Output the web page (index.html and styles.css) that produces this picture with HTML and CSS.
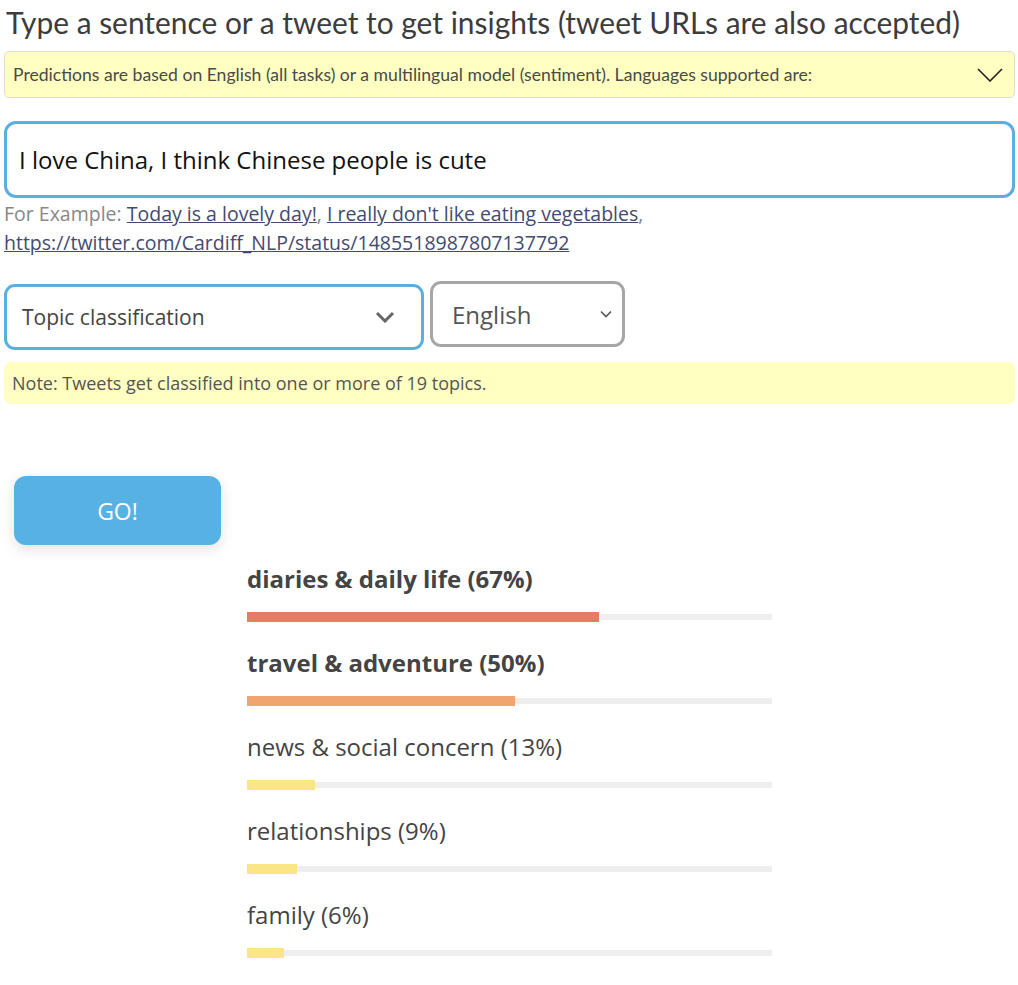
FILE: index.html
```html
<!DOCTYPE html>
<html lang="en">
<head>
    <meta charset="UTF-8">
    <meta name="viewport" content="width=device-width, initial-scale=1.0">
    <title>Tweet insights</title>
    <link rel="stylesheet" href="styles.css">
</head>
<body>

<div class="page">
    <h1 class="title">Type a sentence or a tweet to get insights (tweet URLs are also accepted)</h1>

    <!-- Nota plegable sobre idiomas -->
    <div class="langs">
        <span>Predictions are based on English (all tasks) or a multilingual model (sentiment). Languages supported are:</span>
        <svg class="langs-arrow" width="26" height="14" viewBox="0 0 26 14">
            <path d="M1 1 L13 13 L25 1" fill="none" stroke="#222" stroke-width="1.6"/>
        </svg>
    </div>

    <div class="text-box">I love China, I think Chinese people is cute</div>

    <p class="examples">
        For Example: <a href="#">Today is a lovely day!</a>, <a href="#">I really don't like eating vegetables</a>,
        <a href="#">https://twitter.com/Cardiff_NLP/status/1485518987807137792</a>
    </p>

    <div class="options">
        <div class="select select-task">
            <span>Topic classification</span>
            <svg width="20" height="12" viewBox="0 0 20 12">
                <path d="M2 2 L10 10 L18 2" fill="none" stroke="#666" stroke-width="3"/>
            </svg>
        </div>
        <div class="select select-lang">
            <span>English</span>
            <svg width="12" height="8" viewBox="0 0 12 8">
                <path d="M1 1.5 L6 6.5 L11 1.5" fill="none" stroke="#555" stroke-width="1.6"/>
            </svg>
        </div>
    </div>

    <div class="note">Note: Tweets get classified into one or more of 19 topics.</div>

    <button class="go">GO!</button>

    <!-- Resultados -->
    <div class="results">
        <div class="result strong">
            <div class="label">diaries &amp; daily life (67%)</div>
            <div class="track"><div class="fill red" style="width: 67%"></div></div>
        </div>
        <div class="result strong">
            <div class="label">travel &amp; adventure (50%)</div>
            <div class="track"><div class="fill orange" style="width: 51%"></div></div>
        </div>
        <div class="result">
            <div class="label">news &amp; social concern (13%)</div>
            <div class="track"><div class="fill yellow" style="width: 13%"></div></div>
        </div>
        <div class="result">
            <div class="label">relationships (9%)</div>
            <div class="track"><div class="fill yellow" style="width: 9.5%"></div></div>
        </div>
        <div class="result">
            <div class="label">family (6%)</div>
            <div class="track"><div class="fill yellow" style="width: 7%"></div></div>
        </div>
    </div>
</div>

<div class="bottom-line"></div>

</body>
</html>
```

FILE: styles.css
```css
body {
    margin: 0;
    background-color: #fff;
    color: #444;
    font-family: "Open Sans", Arial, sans-serif;
}
.page {
    padding: 0 3px 0 4px;
}
.title {
    margin: 0;
    padding: 4px 0 0 2px;
    height: 51px;
    box-sizing: border-box;
    font-family: Lato, "Open Sans", sans-serif;
    font-weight: 400;
    font-size: 29.9px;
    line-height: 36px;
    color: #3c3c3c;
}
.langs {
    display: flex;
    align-items: center;
    justify-content: space-between;
    height: 47px;
    box-sizing: border-box;
    padding: 0 11px 0 8px;
    background-color: #ffffc2;
    border: 1px solid #ddd;
    border-radius: 5px;
    font-family: Lato, "Open Sans", sans-serif;
    font-size: 17.6px;
    color: #4a4a4a;
}
.text-box {
    margin-top: 23px;
    height: 77px;
    box-sizing: border-box;
    padding: 0 12px;
    display: flex;
    align-items: center;
    border: 3px solid #5aafe0;
    border-radius: 12px;
    font-size: 24px;
    color: #111;
}
.examples {
    margin: 1px 0 0;
    font-size: 19.5px;
    line-height: 29px;
    color: #888;
}
.examples a {
    color: #434a72;
}
.options {
    display: flex;
    align-items: flex-start;
    gap: 6px;
    margin-top: 24px;
}
.select {
    display: flex;
    align-items: center;
    justify-content: space-between;
    height: 66px;
    box-sizing: border-box;
    border-radius: 11px;
    background-color: #fff;
}
.select-task {
    margin-top: 3px;
    width: 420px;
    padding: 0 26px 0 15px;
    border: 3px solid #5aafe0;
    font-size: 21px;
    color: #444;
}
.select-lang {
    width: 195px;
    padding: 0 10px 0 19px;
    border: 3px solid #a6a6a6;
    font-size: 24px;
    color: #555;
}
.note {
    margin-top: 12px;
    height: 42px;
    box-sizing: border-box;
    padding: 0 8px;
    display: flex;
    align-items: center;
    background-color: #ffffc2;
    border-radius: 7px;
    font-size: 18px;
    color: #555;
}
.go {
    display: block;
    margin: 72px 0 0 10px;
    width: 207px;
    height: 69px;
    border: none;
    border-radius: 12px;
    background-color: #57b1e3;
    color: #fff;
    font-family: "Open Sans", Arial, sans-serif;
    font-size: 23px;
    box-shadow: 0 4px 14px rgba(0, 0, 0, 0.12);
}
.results {
    width: 525px;
    margin: 19px 0 0 243px;
}
.result {
    height: 84px;
}
.label {
    font-size: 24px;
    line-height: 30px;
    color: #444;
}
.strong .label {
    font-weight: 700;
}
.track {
    margin-top: 20px;
    height: 6px;
    background-color: #eee;
}
.fill {
    height: 10px;
    position: relative;
    top: -2px;
}
.red {
    background-color: #e87b64;
}
.orange {
    background-color: #f0a46e;
}
.yellow {
    background-color: #fae684;
}
.bottom-line {
    margin-top: 1px;
    height: 1px;
    background-color: #e8e8e8;
}
```
